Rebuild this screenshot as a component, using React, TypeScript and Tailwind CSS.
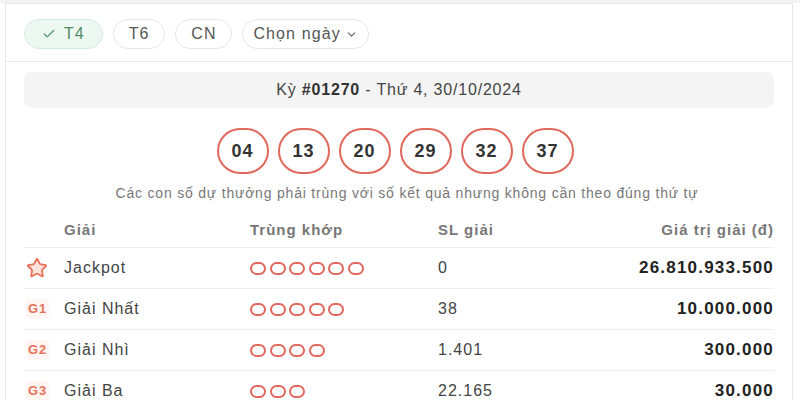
import { Check, ChevronDown, Star } from "lucide-react";

const balls = ["04", "13", "20", "29", "32", "37"];

const prizes = [
  { badge: "star", name: "Jackpot", match: 6, count: "0", value: "26.810.933.500" },
  { badge: "G1", name: "Giải Nhất", match: 5, count: "38", value: "10.000.000" },
  { badge: "G2", name: "Giải Nhì", match: 4, count: "1.401", value: "300.000" },
  { badge: "G3", name: "Giải Ba", match: 3, count: "22.165", value: "30.000" },
];

function Pill({ label, active, chevron }: { label: string; active?: boolean; chevron?: boolean }) {
  if (active) {
    return (
      <button className="flex h-[30px] items-center gap-2 rounded-full border border-[#d3ecdc] bg-[#eef8f2] px-[17px] text-[16px] tracking-[1px] text-[#4f8a66]">
        <Check size={14} strokeWidth={2.2} className="text-[#4c9a6b]" />
        {label}
      </button>
    );
  }
  return (
    <button
      className={
        chevron
          ? "flex h-[30px] items-center gap-1 rounded-full border border-[#e6e6e6] bg-white px-[10px] text-[16px] tracking-[1.1px] text-[#555]"
          : "flex h-[30px] items-center rounded-full border border-[#e6e6e6] bg-white px-[15px] text-[16px] tracking-[1px] text-[#555]"
      }
    >
      {label}
      {chevron && <ChevronDown size={13} strokeWidth={2} className="text-[#666]" />}
    </button>
  );
}

function Badge({ kind }: { kind: string }) {
  if (kind === "star") {
    return <Star size={22} strokeWidth={2} className="fill-[#fde3dc] text-[#e8735a]" />;
  }
  return (
    <span className="rounded-[4px] bg-[#fff5f2] px-[2px] text-[13px] font-bold text-[#e8735a]">{kind}</span>
  );
}

export default function App() {
  return (
    <div className="h-[400px] w-[800px] overflow-hidden bg-white font-['Liberation_Sans',Arial,sans-serif]">
      <div className="h-[3px] bg-[#f2f2f2]" />
      <div className="mx-[5px] w-[788px] border-x border-t border-[#e8e8e8]">
        <div className="flex gap-[10px] border-b border-[#e8e8e8] px-[18px] pb-[12px] pt-[15px]">
          <Pill label="T4" active />
          <Pill label="T6" />
          <Pill label="CN" />
          <Pill label="Chọn ngày" chevron />
        </div>

        <div className="px-[18px] pt-[10px]">
          <div className="flex h-[36px] items-center justify-center rounded-[8px] bg-[#f4f4f4] text-[16px] tracking-[0.8px] text-[#444]">
            Kỳ&nbsp;<span className="font-bold text-[#333]">#01270</span>&nbsp;- Thứ 4, 30/10/2024
          </div>

          <div className="mt-[20px] flex justify-center gap-[9px] pr-[8px]">
            {balls.map((b) => (
              <div
                key={b}
                className="flex h-[46px] w-[52px] items-center justify-center rounded-full border-2 border-[#e0685c] text-[18px] font-bold tracking-[1px] text-[#333]"
              >
                {b}
              </div>
            ))}
          </div>

          <p className="mt-[9px] pl-[16px] text-center text-[14px] tracking-[0.8px] text-[#777]">
            Các con số dự thưởng phải trùng với số kết quả nhưng không cần theo đúng thứ tự
          </p>

          <div className="mt-[9px]">
            <div className="grid h-[35px] grid-cols-[40px_186px_188px_1fr_auto] items-center border-b border-[#eeeeee] text-[15px] font-bold tracking-[1px] text-[#777]">
              <span />
              <span>Giải</span>
              <span>Trùng khớp</span>
              <span>SL giải</span>
              <span>Giá trị giải (đ)</span>
            </div>
            {prizes.map((p) => (
              <div
                key={p.name}
                className="grid h-[41px] grid-cols-[40px_186px_188px_1fr_auto] items-center border-b border-[#eeeeee] text-[16px] tracking-[1px] text-[#444]"
              >
                <span className="flex items-center pl-[2px]">
                  <Badge kind={p.badge} />
                </span>
                <span>{p.name}</span>
                <span className="flex gap-[3.5px]">
                  {Array.from({ length: p.match }).map((_, i) => (
                    <span key={i} className="h-[13px] w-[16px] rounded-full border-2 border-[#e0685c]" />
                  ))}
                </span>
                <span>{p.count}</span>
                <span className="text-right text-[17px] font-bold tracking-[1.2px] text-[#222]">{p.value}</span>
              </div>
            ))}
          </div>
        </div>
      </div>
    </div>
  );
}
